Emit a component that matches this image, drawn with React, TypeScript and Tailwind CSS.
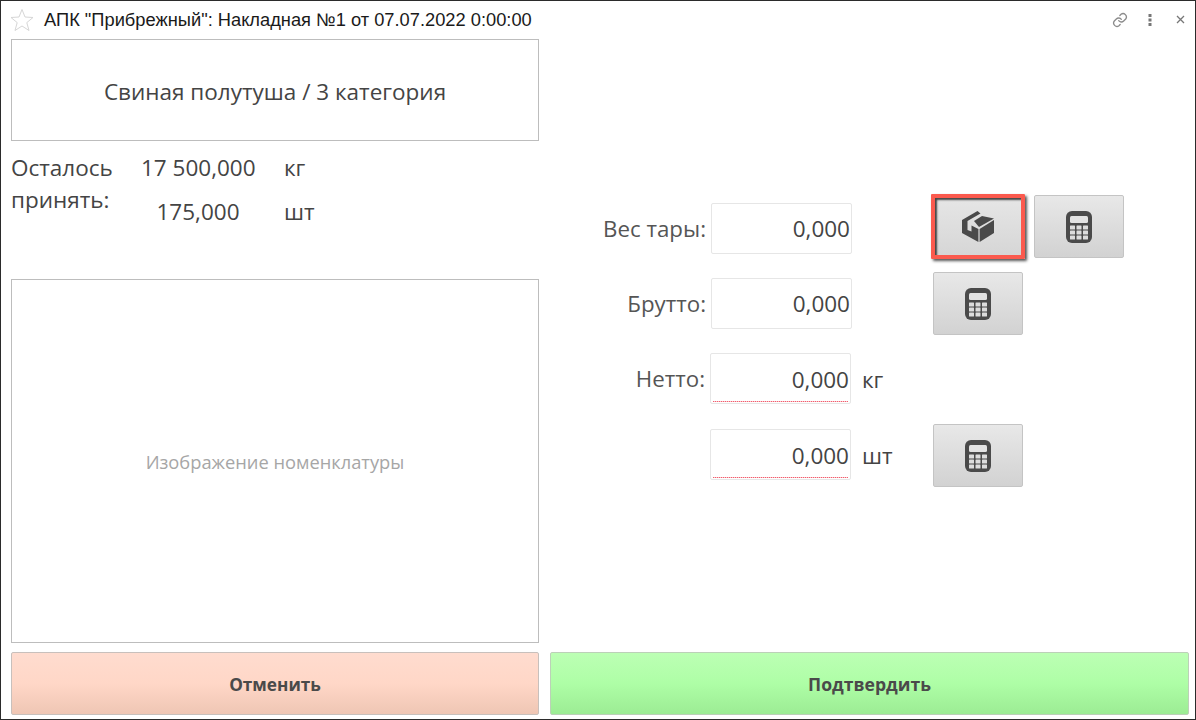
import React from 'react';

const bodyFont = 'font-["Open_Sans",sans-serif]';

const CalcIcon = () => (
  <svg width="26" height="32" viewBox="0 0 26 32">
    <rect x="0" y="0" width="26" height="32" rx="6" fill="#4a4a4a" />
    <rect x="4" y="5" width="18" height="7" rx="1.5" fill="#e2e2e2" />
    {[14.5, 19.5, 24.5].map((y) =>
      [4, 10.5, 17].map((x) => <rect key={`${x}-${y}`} x={x} y={y} width="5" height="4" rx="0.5" fill="#dcdcdc" />),
    )}
  </svg>
);

const BoxIcon = () => (
  <svg width="32" height="31" viewBox="0 0 32 31">
    <path d="M0 9 L15.5 0 L18.5 2.5 L5.5 10 L5.5 19 L9.5 20.5 L9.5 14.5 L16.4 18 L16.4 31 L0 22 Z" fill="#4a4a4a" />
    <path d="M17.6 18 L32 9 L32 22 L17.6 31 Z" fill="#4a4a4a" />
    <path d="M12 10 L20 5 L32 7.5 L17 16 Z" fill="#4a4a4a" />
  </svg>
);

const ToolButton = ({ children }: { children: React.ReactNode }) => (
  <button className="flex h-[63px] w-[90px] shrink-0 items-center justify-center rounded-[2px] border border-[#c4c4c4] bg-gradient-to-b from-[#e8e8e8] to-[#d2d2d2]">
    {children}
  </button>
);

const Field = ({ marked }: { marked?: boolean }) => (
  <div
    className={`relative flex h-[51px] w-[141px] shrink-0 items-center justify-end rounded-[2px] border border-[#e6e6e6] bg-white pr-[1px] text-[22.5px] text-[#444] ${
      marked ? 'pt-[3px]' : ''
    }`}
  >
    0,000
    {marked && (
      <div className="absolute inset-x-[2px] bottom-[1px] h-px bg-[repeating-linear-gradient(90deg,#f0606f_0_1px,#fbc4ca_1px_2px)]" />
    )}
  </div>
);

const Label = ({ children, width = 'w-[161px]' }: { children?: React.ReactNode; width?: string }) => (
  <div className={`${width} shrink-0 pr-[5px] text-right text-[22.3px] text-[#555]`}>{children}</div>
);

export default function App() {
  return (
    <div className={`flex h-[720px] w-[1196px] flex-col border border-[#2b2b2b] bg-white ${bodyFont}`}>
      <header className="flex h-[38px] shrink-0 items-center pb-[1px] pl-[9px] pr-[10px]">
        <svg width="24" height="24" viewBox="0 0 24 24" fill="none" stroke="#d6d6d6" strokeWidth="1">
          <path d="M12 1.5 L15 9 L23 9.5 L16.8 14.6 L19 22.5 L12 18 L5 22.5 L7.2 14.6 L1 9.5 L9 9 Z" />
        </svg>
        <h1 className='ml-[10px] font-["Liberation_Sans",sans-serif] text-[18.3px] text-[#1a1a1a]'>
          АПК "Прибрежный": Накладная №1 от 07.07.2022 0:00:00
        </h1>
        <div className="ml-auto flex items-center">
          <svg width="16" height="16" viewBox="0 0 24 24" fill="none" stroke="#8c8c8c" strokeWidth="2" strokeLinecap="round">
            <path d="M10 13a5 5 0 0 0 7.5.5l3-3a5 5 0 0 0-7-7l-1.7 1.7" />
            <path d="M14 11a5 5 0 0 0-7.5-.5l-3 3a5 5 0 0 0 7 7l1.7-1.7" />
          </svg>
          <svg className="ml-[20px]" width="4" height="12" viewBox="0 0 4 12" fill="#777">
            <rect x="0.5" y="0" width="3" height="3" />
            <rect x="0.5" y="4.5" width="3" height="3" />
            <rect x="0.5" y="9" width="3" height="3" />
          </svg>
          <svg className="ml-[24px]" width="9" height="9" viewBox="0 0 9 9" stroke="#777" strokeWidth="1.3">
            <path d="M1 1 L8 8 M8 1 L1 8" />
          </svg>
        </div>
      </header>

      <main className="flex min-h-0 flex-1 gap-[11px] pl-[10px] pr-[6px]">
        <section className="flex w-[528px] shrink-0 flex-col">
          <div className="flex h-[102px] shrink-0 items-center justify-center border border-[#bdbdbd] pt-[3px] text-[22.5px] text-[#444]">
            Свиная полутуша / 3 категория
          </div>
          <div className="flex h-[138px] shrink-0 pt-[5px] text-[22.5px] text-[#444]">
            <div className="w-[130px] pt-[6px] leading-[32px]">
              Осталось
              <br />
              принять:
            </div>
            <div className="flex flex-col">
              <div className="flex h-[44px] items-center">
                <span className="w-[114px] whitespace-nowrap text-center">17 500,000</span>
                <span className="ml-[29px]">кг</span>
              </div>
              <div className="flex h-[44px] items-center">
                <span className="w-[114px] whitespace-nowrap text-center">175,000</span>
                <span className="ml-[29px]">шт</span>
              </div>
            </div>
          </div>
          <div className="flex h-[364px] shrink-0 items-center justify-center border border-[#bdbdbd] pt-[1px] text-[18.3px] text-[#a6a6a6]">
            Изображение номенклатуры
          </div>
          <button className="mt-[9px] flex h-[63px] shrink-0 items-center justify-center rounded-[2px] border border-[#c8c0bc] bg-gradient-to-b from-[#ffdccf] via-[#ffd7c7] to-[#efc6b4] pt-[3px] text-[17.2px] font-bold text-[#4a4a4a]">
            Отменить
          </button>
        </section>

        <section className="flex flex-1 flex-col">
          <div className="flex flex-1 flex-col pt-[164px]">
            <div className="flex h-[51px] items-center">
              <Label>Вес тары:</Label>
              <Field />
              <div className="-mt-[4px] ml-[79px] flex gap-[9px]">
                <div className="rounded-[1px] border-[4px] border-[#fb5a4e] shadow-[2px_2px_3px_#555]">
                  <button className="flex h-[57px] w-[86px] items-center justify-center bg-gradient-to-b from-[#e6e6e6] to-[#d6d6d6] shadow-[inset_2px_2px_2px_#444]">
                    <BoxIcon />
                  </button>
                </div>
                <div className="mt-[1px]">
                  <ToolButton>
                    <CalcIcon />
                  </ToolButton>
                </div>
              </div>
            </div>
            <div className="mt-[24px] flex h-[51px] items-center">
              <Label>Брутто:</Label>
              <Field />
              <div className="ml-[81px]">
                <ToolButton>
                  <CalcIcon />
                </ToolButton>
              </div>
            </div>
            <div className="mt-[24px] flex h-[51px] items-center">
              <Label width="w-[160px]">Нетто:</Label>
              <Field marked />
              <span className="ml-[11px] pt-[2px] text-[22.5px] text-[#444]">кг</span>
            </div>
            <div className="mt-[25px] flex h-[51px] items-center">
              <div className="w-[160px] shrink-0" />
              <Field marked />
              <span className="ml-[11px] w-[71px] shrink-0 pt-[2px] text-[22.5px] text-[#444]">шт</span>
              <div className="mt-[2px]">
                <ToolButton>
                  <CalcIcon />
                </ToolButton>
              </div>
            </div>
          </div>
          <button className="mb-[4px] flex h-[63px] shrink-0 items-center justify-center rounded-[2px] border border-[#bcd0b8] bg-gradient-to-b from-[#bcffb4] via-[#aefea6] to-[#9cec94] pt-[1px] text-[17.6px] font-bold text-[#4a4a4a]">
            Подтвердить
          </button>
        </section>
      </main>
    </div>
  );
}
